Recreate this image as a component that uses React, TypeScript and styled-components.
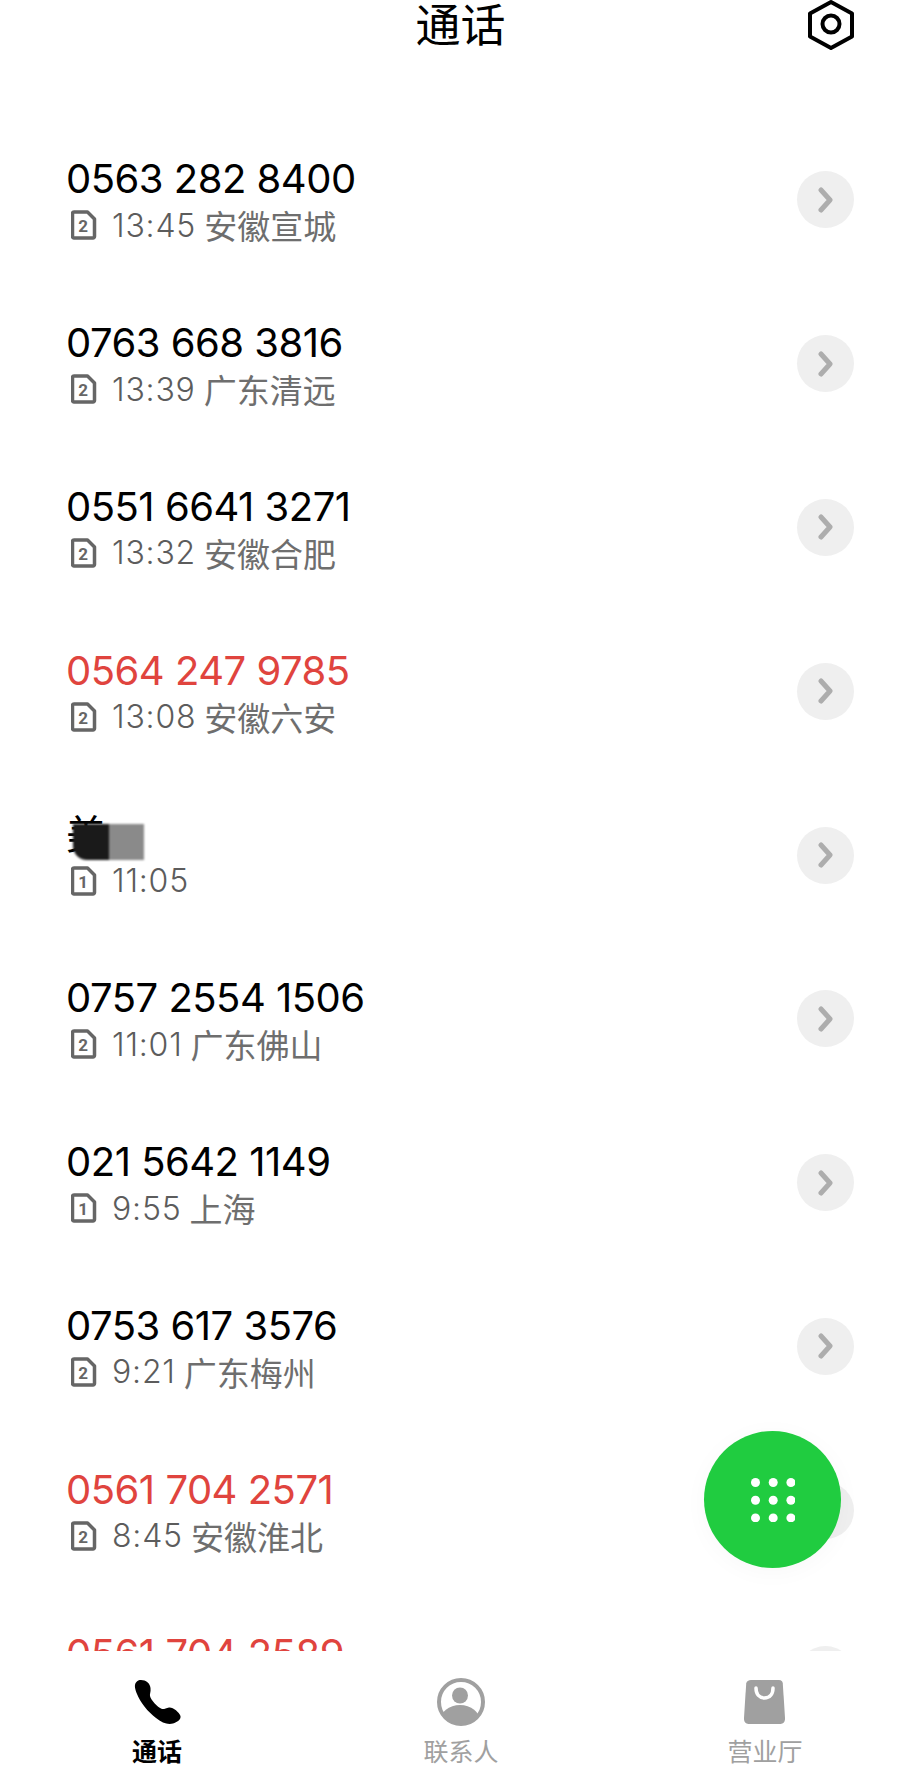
import styled, { createGlobalStyle } from 'styled-components';

const GlobalStyle = createGlobalStyle`
  html, body {
    margin: 0;
    padding: 0;
    background: #fff;
  }
  * {
    box-sizing: border-box;
  }
`;

const Page = styled.div`
  width: 914px;
  height: 1790px;
  position: relative;
  display: flex;
  flex-direction: column;
  overflow: hidden;
  background: #fff;
  font-family: Inter, "Noto Sans CJK SC", sans-serif;
`;

const Header = styled.header`
  height: 118px;
  flex: none;
  position: relative;
  display: flex;
  justify-content: center;
  align-items: flex-start;
  padding: 2px 0 0 7px;
`;

const Title = styled.h1`
  margin: 0;
  font-size: 45px;
  line-height: 48px;
  font-weight: 400;
  color: #000;
`;

const GearButton = styled.div`
  position: absolute;
  top: 0;
  right: 60px;
  width: 46px;
  height: 50px;
`;

const List = styled.div`
  height: 1533px;
  flex: none;
  overflow: hidden;
`;

const Row = styled.div`
  height: 163.8px;
  padding: 0 60px 0 66px;
  display: flex;
  align-items: center;
  justify-content: space-between;
`;

const Info = styled.div`
  display: flex;
  flex-direction: column;
  margin-top: 5px;
`;

const NameLine = styled.div<{ $missed?: boolean }>`
  position: relative;
  font-size: 40px;
  line-height: 48px;
  letter-spacing: -0.5px;
  color: ${(p) => (p.$missed ? '#e0443e' : '#000')};
`;

const Mosaic = styled.div`
  position: absolute;
  left: 7px;
  top: 13px;
  width: 71px;
  height: 36px;
  display: flex;
  border-radius: 0 0 0 14px;
  overflow: hidden;
  filter: blur(1px);
`;

const MosaicCell = styled.div<{ $tone: string }>`
  flex: 1;
  background: ${(p) => p.$tone};
`;

const Detail = styled.div`
  display: flex;
  align-items: center;
  height: 48px;
  margin-top: -2px;
  font-size: 32px;
  font-weight: 300;
  letter-spacing: 0.8px;
  color: #5c5c5c;
`;

const SimIcon = styled.svg`
  width: 26px;
  height: 30px;
  margin: 0 15px 0 5px;
  flex: none;
`;

const Place = styled.span`
  margin-left: 8px;
  font-size: 33px;
  letter-spacing: 0;
  font-weight: 400;
  color: #6e6e6e;
`;

const Chevron = styled.div`
  width: 57px;
  height: 57px;
  border-radius: 50%;
  background: #efefef;
  display: flex;
  align-items: center;
  justify-content: center;
`;

const Fab = styled.div`
  position: absolute;
  left: 704px;
  top: 1431px;
  width: 137px;
  height: 137px;
  border-radius: 50%;
  background: #20cc40;
  box-shadow: 0 4px 24px rgba(0, 0, 0, 0.03);
  display: flex;
  align-items: center;
  justify-content: center;
`;

const TabBar = styled.nav`
  flex: 1;
  display: grid;
  grid-template-columns: repeat(3, 304px);
  padding: 27px 0 0 5px;
  background: #fff;
`;

const Tab = styled.div<{ $active?: boolean }>`
  display: flex;
  flex-direction: column;
  align-items: center;
  gap: 9px;
  color: ${(p) => (p.$active ? '#000' : '#a0a0a0')};
  font-size: 25px;
  line-height: 34px;
  font-weight: ${(p) => (p.$active ? 700 : 400)};
`;

const TabIcon = styled.svg`
  width: 48px;
  height: 48px;
  display: block;
`;

type Call = { name: string; time: string; place?: string; sim: 1 | 2; missed?: boolean; hidden?: boolean };

const calls: Call[] = [
  { name: '0563 282 8400', time: '13:45', place: '安徽宣城', sim: 2 },
  { name: '0763 668 3816', time: '13:39', place: '广东清远', sim: 2 },
  { name: '0551 6641 3271', time: '13:32', place: '安徽合肥', sim: 2 },
  { name: '0564 247 9785', time: '13:08', place: '安徽六安', sim: 2, missed: true },
  { name: '美', time: '11:05', sim: 1, hidden: true },
  { name: '0757 2554 1506', time: '11:01', place: '广东佛山', sim: 2 },
  { name: '021 5642 1149', time: '9:55', place: '上海', sim: 1 },
  { name: '0753 617 3576', time: '9:21', place: '广东梅州', sim: 2 },
  { name: '0561 704 2571', time: '8:45', place: '安徽淮北', sim: 2, missed: true },
  { name: '0561 704 2589', time: '8:40', place: '安徽淮北', sim: 2, missed: true },
];

function Sim({ n }: { n: number }) {
  return (
    <SimIcon viewBox="0 0 26 30">
      <path
        d="M3.500 2h13l7 7v17.500a1.500 1.500 0 0 1-1.500 1.500h-19a1.500 1.500 0 0 1-1.500-1.500v-23a1.500 1.500 0 0 1 1.500-1.500z"
        fill="none"
        stroke="#666"
        strokeWidth="3.500"
        strokeLinejoin="round"
      />
      <text x="12.500" y="22" textAnchor="middle" fontSize="17" fontWeight="700" fill="#666" fontFamily="Roboto, sans-serif">
        {n}
      </text>
    </SimIcon>
  );
}

export default function App() {
  const dots = [0, 1, 2].flatMap((r) => [0, 1, 2].map((c) => [c, r]));

  return (
    <Page>
      <GlobalStyle />
      <Header>
        <Title>通话</Title>
        <GearButton>
          <svg width="46" height="50" viewBox="0 0 46 50">
            <path d="M23 2 44 13.500v23L23 48 2 36.500v-23z" fill="none" stroke="#000" strokeWidth="4" strokeLinejoin="round" />
            <circle cx="23" cy="24" r="8.500" fill="none" stroke="#000" strokeWidth="4" />
          </svg>
        </GearButton>
      </Header>

      <List>
        {calls.map((call) => (
          <Row key={call.name}>
            <Info>
              <NameLine $missed={call.missed}>
                {call.name}
                {call.hidden && (
                  <Mosaic>
                    <MosaicCell $tone="#1a1a1a" />
                    <MosaicCell $tone="#8a8a8a" />
                  </Mosaic>
                )}
              </NameLine>
              <Detail>
                <Sim n={call.sim} />
                {call.time}
                {call.place && <Place>{call.place}</Place>}
              </Detail>
            </Info>
            <Chevron>
              <svg width="18" height="26" viewBox="0 0 18 26">
                <path d="M4 3 13 13 4 23" fill="none" stroke="#adadad" strokeWidth="5" strokeLinecap="round" strokeLinejoin="round" />
              </svg>
            </Chevron>
          </Row>
        ))}
      </List>

      <Fab>
        <svg width="44" height="44" viewBox="0 0 44 44">
          {dots.map(([c, r]) => (
            <circle key={`${c}-${r}`} cx={4.500 + c * 17.700} cy={4.500 + r * 17.700} r="4.500" fill="#fff" />
          ))}
        </svg>
      </Fab>

      <TabBar>
        <Tab $active>
          <TabIcon viewBox="13 7 48 48">
            <path
              d="M21 9C26 9 30 12 30.500 17C31 21 29.500 23 30 25C31 29 37 36 42 38C44 38.500 46 37 49 36.500C53 36 59 41 60.500 45C61 49 57 51 53 52.500C48 54 42 52 36 47C28 41 20 31 17 23C15 18 14 14 16 11.500C17.500 9.500 19 9 21 9Z"
              fill="#000"
            />
          </TabIcon>
          通话
        </Tab>
        <Tab>
          <TabIcon viewBox="13.500 7 48 48">
            <defs>
              <clipPath id="faceClip">
                <circle cx="37.500" cy="31" r="22" />
              </clipPath>
            </defs>
            <circle cx="37.500" cy="31" r="22" fill="none" stroke="#a0a0a0" strokeWidth="4" />
            <circle cx="36.500" cy="24.500" r="8" fill="#a0a0a0" />
            <ellipse cx="36.500" cy="50" rx="20" ry="16" fill="#a0a0a0" clipPath="url(#faceClip)" />
          </TabIcon>
          联系人
        </Tab>
        <Tab>
          <TabIcon viewBox="16 7 48 48">
            <path
              d="M26 9h28c2.500 0 3.500 1.500 3.800 3.500L60 47c.2 3.500-1.500 6-4.500 6h-32c-3 0-4.700-2.500-4.500-6l2.200-34.500C21.500 10.500 23.500 9 26 9z"
              fill="#a0a0a0"
            />
            <path d="M31 17c0 6.500 3.500 10 8.500 10s8.500-3.500 8.500-10" fill="none" stroke="#fff" strokeWidth="3.500" strokeLinecap="round" />
          </TabIcon>
          营业厅
        </Tab>
      </TabBar>
    </Page>
  );
}
